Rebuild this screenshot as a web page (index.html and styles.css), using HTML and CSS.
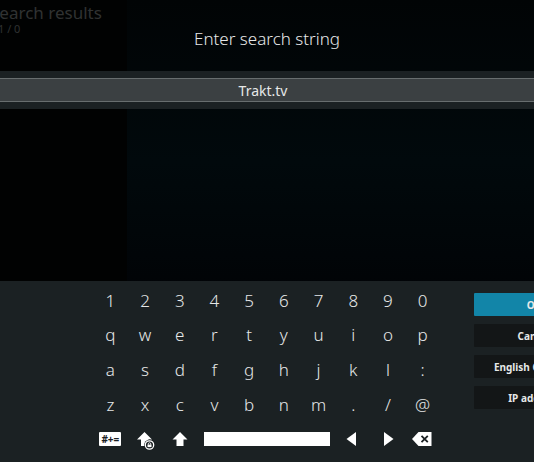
FILE: index.html
```html
<!DOCTYPE html>
<html lang="en">
<head>
<meta charset="utf-8">
<title>Enter search string</title>
<link rel="stylesheet" href="styles.css">
</head>
<body>
<main class="screen">
  <div class="results" aria-hidden="true">
    <div class="results-title">Search results</div>
    <div class="results-count">1 / 0</div>
  </div>
  <form class="dialog">
    <header class="heading"><label for="query">Enter search string</label></header>
    <div class="entry"><input id="query" class="query" type="text" value="Trakt.tv"></div>
    <div class="spacer"></div>
    <section class="panel">
      <div class="keys">
        <button type="button">1</button><button type="button">2</button><button type="button">3</button><button type="button">4</button><button type="button">5</button><button type="button">6</button><button type="button">7</button><button type="button">8</button><button type="button">9</button><button type="button">0</button>
        <button type="button">q</button><button type="button">w</button><button type="button">e</button><button type="button">r</button><button type="button">t</button><button type="button">y</button><button type="button">u</button><button type="button">i</button><button type="button">o</button><button type="button">p</button>
        <button type="button">a</button><button type="button">s</button><button type="button">d</button><button type="button">f</button><button type="button">g</button><button type="button">h</button><button type="button">j</button><button type="button">k</button><button type="button">l</button><button type="button">:</button>
        <button type="button">z</button><button type="button">x</button><button type="button">c</button><button type="button">v</button><button type="button">b</button><button type="button">n</button><button type="button">m</button><button type="button">.</button><button type="button">/</button><button type="button">@</button>
        <button type="button"><span class="symbols">#+=</span></button>
        <button type="button" aria-label="Caps lock">
          <svg width="22" height="22" viewBox="0 0 22 22"><path fill="#fff" d="M10.500 4 18 11.500H14.500V18H7V11.500H3Z"/><circle cx="15.500" cy="17" r="5.400" fill="#1b2123"/><circle cx="15.500" cy="17" r="4.200" fill="none" stroke="#fff" stroke-width="1.300"/><path fill="#fff" d="M13.500 16.600h4v2.500h-4z"/><path fill="none" stroke="#fff" stroke-width=".8" d="M14.300 16.800v-.9a1.200 1.200 0 0 1 2.400 0v.9"/></svg>
        </button>
        <button type="button" aria-label="Shift">
          <svg width="22" height="22" viewBox="0 0 22 22"><path fill="#fff" d="M11 4 18.500 11.500H14.500V18H7.500V11.500H3.500Z"/></svg>
        </button>
        <button type="button" class="space" aria-label="Space"><span class="bar"></span></button>
        <button type="button" aria-label="Cursor left">
          <svg width="22" height="22" viewBox="0 0 22 22"><path fill="#fff" d="M14 4V18L4.500 11Z"/></svg>
        </button>
        <button type="button" aria-label="Cursor right">
          <svg width="22" height="22" viewBox="0 0 22 22"><path fill="#fff" d="M7 4V18L16.500 11Z"/></svg>
        </button>
        <button type="button" aria-label="Backspace">
          <svg width="22" height="22" viewBox="0 0 22 22"><path fill="#fff" d="M0 11 6.500 4H19.500V18H6.500Z"/><path fill="none" stroke="#1b2123" stroke-width="1.800" d="M9.500 7.800 15.800 14.200M15.800 7.800 9.500 14.200"/></svg>
        </button>
      </div>
      <div class="actions">
        <button type="submit" class="focused">OK</button>
        <button type="button">Cancel</button>
        <button type="button">English QWERTY</button>
        <button type="button">IP address</button>
      </div>
    </section>
  </form>
</main>
</body>
</html>
```
FILE: styles.css
```css
* { box-sizing: border-box; }

body {
  margin: 0;
  background: #000;
  color: #e6e8e8;
  font-family: "Noto Sans", "Open Sans", sans-serif;
  overflow: hidden;
}

button, input { font: inherit; color: inherit; }

button {
  display: flex;
  align-items: center;
  justify-content: center;
  padding: 0;
  border: 0;
  background: none;
}

.screen {
  position: relative;
  min-height: 100vh;
  overflow: hidden;
  background: linear-gradient(90deg, #010202 127px, transparent 127px),
    linear-gradient(#010405, #01090c 35%, #010306 65%);
}

.results {
  position: absolute;
  top: 2px;
  left: -10px;
  color: #303232;
}

.results-title { font-size: 17px; line-height: 21px; }

.results-count {
  padding-left: 8px;
  font-size: 11px;
  line-height: 11px;
}

.dialog {
  position: relative;
  display: flex;
  flex-direction: column;
  min-height: 100vh;
}

.heading {
  padding-top: 27px;
  height: 71px;
  text-align: center;
  font-size: 17px;
  font-weight: 300;
  line-height: 24px;
}

.entry { padding: 7px 0; background: #1b2123; }

.query {
  display: block;
  width: 100%;
  height: 24px;
  padding: 0 8px 0 0;
  border: solid #686e6f;
  border-width: 1px 0;
  border-radius: 0;
  outline: 0;
  background: #3b4042;
  text-align: center;
  font-size: 14px;
}

.spacer { flex: 1; }

.panel {
  display: flex;
  align-items: flex-start;
  gap: 34px;
  height: 181px;
  padding: 2px 0 0 93px;
  background: #1b2123;
}

.keys {
  display: grid;
  grid-template-columns: repeat(10, 1fr);
  grid-auto-rows: 1fr;
  flex: 0 0 347px;
  height: 173px;
  font-size: 17px;
  font-weight: 300;
}

.space { grid-column: span 4; padding-left: 2px; }

.bar {
  width: 126px;
  height: 14px;
  background: #fff;
}

.symbols {
  width: 22px;
  height: 14px;
  border-radius: 1px;
  background: #fff;
  color: #1b2123;
  font-size: 10px;
  font-weight: 700;
  line-height: 14px;
}

.actions {
  display: flex;
  flex-direction: column;
  flex: 0 0 120px;
  gap: 8px;
  padding-top: 10px;
  font-size: 10px;
  font-weight: 700;
}

.actions button {
  height: 23px;
  border-radius: 1px;
  background: #131617;
  white-space: nowrap;
}

.actions .focused { background: #1285a8; }
```
